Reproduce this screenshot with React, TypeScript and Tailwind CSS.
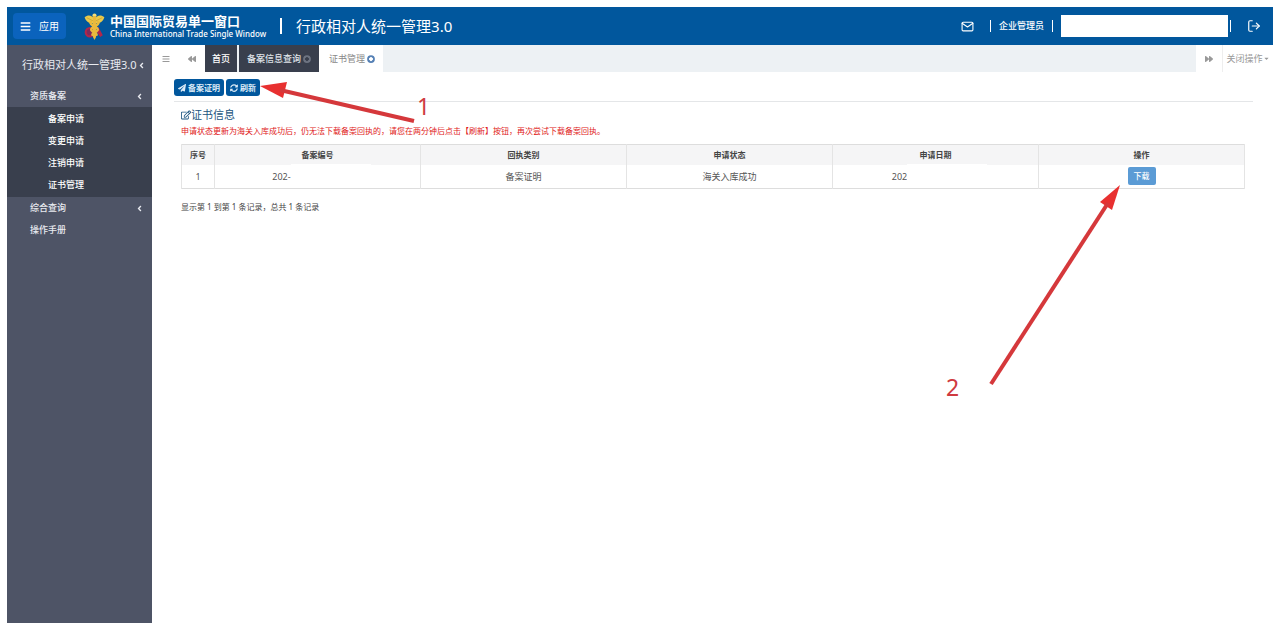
import React from 'react';
import {
  FaAngleLeft,
  FaBackward,
  FaBars,
  FaCaretDown,
  FaForward,
  FaPaperPlane,
  FaRegEdit,
  FaSyncAlt,
} from 'react-icons/fa';
import { FiLogOut, FiMail } from 'react-icons/fi';

const subMenu = ['备案申请', '变更申请', '注销申请', '证书管理'];

const columns = ['备案编号', '回执类别', '申请状态', '申请日期', '操作'];

const rows = [{ id: 1, code: '202-', type: '备案证明', status: '海关入库成功', date: '202' }];

function Emblem() {
  return (
    <svg viewBox="0 0 40 52" className="h-[27px] w-[21px] shrink-0" aria-hidden="true">
      <circle cx="11" cy="37" r="8" fill="#7d2a5c" stroke="#b3264a" strokeWidth="4" />
      <path d="M27 26 L36 43 L31 46 L24 36 Z" fill="#b3264a" />
      <path d="M20 12 C15 3 7 3 1 8 C3 15 8 20 18 20 Z" fill="#e9c94b" />
      <path d="M20 12 C25 3 33 3 39 8 C37 15 32 20 22 20 Z" fill="#e9c94b" />
      <circle cx="20" cy="5" r="4" fill="#f3dc78" />
      <path d="M17 6 H23 V46 L20 52 L17 46 Z" fill="#e9b93d" />
      <path
        d="M13 17 C8 24 29 26 26 33 C24 38 16 37 16 42 M27 17 C32 24 11 26 14 33 C16 38 24 37 24 42"
        fill="none"
        stroke="#e9b93d"
        strokeWidth="5"
        strokeLinecap="round"
      />
      <path d="M5 9 L17 15 M35 9 L23 15" stroke="#b98a2a" strokeWidth="1" />
    </svg>
  );
}

function CloseDot({ className }: { className: string }) {
  return (
    <svg viewBox="0 0 16 16" className={`size-2 ${className}`} aria-hidden="true">
      <circle cx="8" cy="8" r="6" fill="none" stroke="currentColor" strokeWidth="3.5" />
      <path d="M4 4 L6 6 M12 4 L10 6 M4 12 L6 10 M12 12 L10 10" stroke="currentColor" strokeWidth="1.5" />
    </svg>
  );
}

function Header() {
  return (
    <header className="flex h-[38px] items-center bg-[#01579d] text-white">
      <button type="button" className="ml-1.5 flex h-[26px] items-center gap-2 rounded-sm bg-[#0b63bd] px-[7px] text-[10px]">
        <FaBars className="size-[11px]" />
        应用
      </button>
      <div className="ml-[18px] flex items-center gap-[5px]">
        <Emblem />
        <div className="whitespace-nowrap font-bold">
          <div className="text-[13px] leading-4">中国国际贸易单一窗口</div>
          <div className="text-[8px] leading-[10px] font-medium">China International Trade Single Window</div>
        </div>
      </div>
      <span className="ml-3.5 h-4 w-0.5 bg-white" />
      <h1 className="ml-3.5 whitespace-nowrap text-[15px]">行政相对人统一管理3.0</h1>
      <div className="ml-auto flex items-center text-[9px] font-medium">
        <button type="button" aria-label="消息" className="mr-4">
          <FiMail className="size-[13px]" />
        </button>
        <span className="h-3 w-px bg-white" />
        <span className="mx-2 whitespace-nowrap">企业管理员</span>
        <span className="h-3 w-px bg-white" />
        <span className="ml-2 h-[22px] w-[167px] bg-white" />
        <span className="ml-0.5 h-3 w-px bg-white" />
        <button type="button" aria-label="退出" className="mr-3 ml-4">
          <FiLogOut className="size-[14px]" />
        </button>
      </div>
    </header>
  );
}

function MenuItem({ label, hasArrow }: { label: string; hasArrow?: boolean }) {
  return (
    <a href="#" className="flex h-[22px] items-center justify-between pr-2 pl-[23px]">
      {label}
      {hasArrow && <FaAngleLeft className="size-[9px]" />}
    </a>
  );
}

function Sidebar() {
  return (
    <nav className="w-[145px] shrink-0 bg-[#4e5466] text-[9px] font-medium text-[#e8eaf0]">
      <a href="#" className="flex h-10 items-center justify-between whitespace-nowrap pr-2.5 pl-[15px] text-[11px] font-normal">
        行政相对人统一管理3.0
        <FaAngleLeft className="size-[9px] shrink-0" />
      </a>
      <MenuItem label="资质备案" hasArrow />
      <ul className="bg-[#393f4d] py-px text-white">
        {subMenu.map((item) => (
          <li key={item}>
            <a href="#" className="flex h-[22px] items-center pl-[41px]">
              {item}
            </a>
          </li>
        ))}
      </ul>
      <MenuItem label="综合查询" hasArrow />
      <MenuItem label="操作手册" />
    </nav>
  );
}

function TabBar() {
  return (
    <div className="flex h-[27px] whitespace-nowrap bg-[#edf1f4] text-[9px] text-[#999]">
      <button type="button" aria-label="收起菜单" className="flex w-[27px] items-center justify-center bg-white">
        <FaBars className="size-2" />
      </button>
      <button type="button" aria-label="向左" className="flex w-[26px] items-center justify-center bg-white">
        <FaBackward className="size-2" />
      </button>
      <a href="#" className="mr-0.5 flex items-center bg-[#393f4d] px-[7px] font-medium text-white">首页</a>
      <a href="#" className="flex items-center gap-0.5 bg-[#393f4d] px-2 font-medium text-[#dfe2e8]">
        备案信息查询
        <CloseDot className="text-[#6d7482]" />
      </a>
      <a href="#" className="flex items-center gap-0.5 bg-white pr-2 pl-2.5 text-[#888]">
        证书管理
        <CloseDot className="text-[#5580b5]" />
      </a>
      <button type="button" aria-label="向右" className="ml-auto flex w-[26px] items-center justify-center bg-white">
        <FaForward className="size-2" />
      </button>
      <button type="button" className="flex w-[51px] items-center justify-center border-l border-[#eee] bg-white">
        关闭操作
        <FaCaretDown className="size-[7px]" />
      </button>
    </div>
  );
}

// value whose tail is blanked out; the blank reaches slightly into the heading row
function Masked({ value }: { value: string }) {
  return (
    <span className="flex items-center justify-center">
      {value}
      <span className="relative h-4 w-[72px]">
        <span className="absolute -top-1 left-0 h-4 w-20 bg-white" />
      </span>
    </span>
  );
}

function CertTable() {
  return (
    <table className="w-full table-fixed border-collapse border border-[#ddd] text-center text-[9px] text-[#555]">
      <thead>
        <tr className="h-5 bg-[#f5f5f6] text-[8px] text-[#444]">
          <th className="w-[33px] border-x border-[#e4e4e4]">序号</th>
          {columns.map((col) => (
            <th key={col} className="border-x border-[#e4e4e4]">{col}</th>
          ))}
        </tr>
      </thead>
      <tbody>
        {rows.map((row) => (
          <tr key={row.id} className="h-6">
            <td className="border-x border-[#e4e4e4]">{row.id}</td>
            <td className="border-x border-[#e4e4e4]"><Masked value={row.code} /></td>
            <td className="border-x border-[#e4e4e4]">{row.type}</td>
            <td className="border-x border-[#e4e4e4]">{row.status}</td>
            <td className="border-x border-[#e4e4e4]"><Masked value={row.date} /></td>
            <td className="border-x border-[#e4e4e4]">
              <button type="button" className="mx-auto block h-[18px] rounded-xs bg-[#5b9bd5] px-1.5 text-[8px] font-medium text-white">
                下载
              </button>
            </td>
          </tr>
        ))}
      </tbody>
    </table>
  );
}

function Annotations() {
  return (
    <svg className="pointer-events-none absolute top-0 left-0" width="1280" height="630" aria-hidden="true">
      <g fill="#e83030" stroke="none">
        <path d="M260 86 L287 82 L283 98 Z" />
        <path d="M1120 185 L1100 202 L1112 210 Z" />
        <text x="417" y="115" fontSize="23" fill="#cf3a40">1</text>
        <text x="946" y="396" fontSize="23" fill="#cf3a40">2</text>
      </g>
      <g stroke="#d5383b" strokeWidth="4">
        <path d="M280 90 L414 121" />
        <path d="M1108 203 L991 384" />
      </g>
    </svg>
  );
}

export default function App() {
  return (
    <div className="relative flex min-h-screen flex-col bg-white p-[7px] font-['Noto_Sans','Noto_Sans_CJK_SC',sans-serif]">
      <Header />
      <div className="flex flex-1">
        <Sidebar />
        <main className="min-w-0 flex-1">
          <TabBar />
          <div className="pr-5 pl-[22px]">
            <div className="flex gap-0.5 border-b border-[#e4e6e8] pt-[7px] pb-[5px] text-[8px] font-bold text-[#dcebf7]">
              <button type="button" className="flex h-[17px] items-center gap-0.5 rounded-[3px] bg-[#01579d] px-1">
                <FaPaperPlane className="size-2" />
                备案证明
              </button>
              <button type="button" className="flex h-[17px] items-center gap-0.5 rounded-[3px] bg-[#01579d] px-1">
                <FaSyncAlt className="size-2" />
                刷新
              </button>
            </div>
          </div>
          <div className="pt-[3px] pr-7 pl-[29px]">
            <h2 className="flex items-center text-[11px] leading-5 text-[#1b5480]">
              <FaRegEdit className="size-[10px]" />
              证书信息
            </h2>
            <p className="mb-[7px] text-[8px] leading-3 text-[#e02020]">
              申请状态更新为海关入库成功后，仍无法下载备案回执的，请您在两分钟后点击【刷新】按钮，再次尝试下载备案回执。
            </p>
            <CertTable />
            <p className="mt-2.5 text-[8px] leading-4 text-[#444]">显示第 1 到第 1 条记录，总共 1 条记录</p>
          </div>
        </main>
      </div>
      <Annotations />
    </div>
  );
}
